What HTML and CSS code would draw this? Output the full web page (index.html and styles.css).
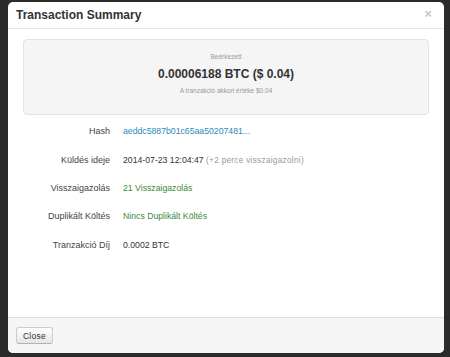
FILE: index.html
```html
<!DOCTYPE html>
<html lang="hu">
<head>
    <meta charset="UTF-8"/>
    <title>Transaction Summary</title>
    <link rel="stylesheet" href="styles.css">
</head>
<body>
    <div class="backdrop">
        <div class="modal">
            <div class="modal-header">
                <h3>Transaction Summary</h3>
                <span class="close-x">&times;</span>
            </div>
            <div class="modal-body">
                <div class="well">
                    <div class="well-small">Beérkezett</div>
                    <div class="amount">0.00006188 BTC ($ 0.04)</div>
                    <div class="well-small">A tranzakció akkori értéke $0.04</div>
                </div>
                <div class="details">
                    <div class="row">
                        <span class="label">Hash</span>
                        <span class="value link">aeddc5887b01c65aa50207481...</span>
                    </div>
                    <div class="row">
                        <span class="label">Küldés ideje</span>
                        <span class="value">2014-07-23 12:04:47 <span class="muted">(+2 perce visszaigazolni)</span></span>
                    </div>
                    <div class="row">
                        <span class="label">Visszaigazolás</span>
                        <span class="value ok">21 Visszaigazolás</span>
                    </div>
                    <div class="row">
                        <span class="label">Duplikált Költés</span>
                        <span class="value ok">Nincs Duplikált Költés</span>
                    </div>
                    <div class="row">
                        <span class="label">Tranzakció Díj</span>
                        <span class="value">0.0002 BTC</span>
                    </div>
                </div>
            </div>
            <div class="modal-footer">
                <button type="button">Close</button>
            </div>
        </div>
    </div>
</body>
</html>
```

FILE: styles.css
```css
html, body {
    margin: 0;
    height: 100%;
    background: #2b2b2b;
}

body {
    font-family: "Liberation Sans", Arial, sans-serif;
    color: #333;
}

.backdrop {
    padding: 2px 6px 0 8px;
    height: 100%;
    box-sizing: border-box;
}

.modal {
    background: #fff;
    border-radius: 5px;
    height: 351px;
    display: flex;
    flex-direction: column;
    overflow: hidden;
}

.modal-header {
    height: 27px;
    border-bottom: 1px solid #e5e5e5;
    display: flex;
    align-items: center;
    justify-content: space-between;
    padding: 0 12px 0 8px;
    box-sizing: border-box;
}

.modal-header h3 {
    margin: 0;
    font-size: 12px;
    font-weight: bold;
    color: #333;
}

.close-x {
    font-size: 13px;
    font-weight: bold;
    color: #c8c8c8;
    margin-top: -4px;
}

.modal-body {
    flex: 1;
    padding: 10px 15px 0 15px;
}

.well {
    height: 76px;
    box-sizing: border-box;
    background: #f5f5f5;
    border: 1px solid #e3e3e3;
    border-radius: 4px;
    text-align: center;
    padding-top: 12px;
}

.well-small {
    font-size: 6.5px;
    color: #999;
    line-height: 9px;
}

.amount {
    font-size: 12px;
    font-weight: bold;
    color: #333;
    line-height: 14px;
    margin: 6px 0 5px;
}

.details {
    padding-top: 2px;
}

.row {
    display: flex;
    align-items: center;
    height: 28.4px;
    font-size: 9px;
}

.label {
    width: 87px;
    text-align: right;
    color: #444;
    margin-right: 13px;
}

.value {
    color: #333;
    font-size: 8.7px;
}

.link {
    color: #2a8bb8;
}

.ok {
    color: #3a8a3a;
}

.muted {
    color: #999;
    font-size: 8.2px;
    letter-spacing: 0.3px;
}

.modal-footer {
    height: 36px;
    background: #f5f5f5;
    border-top: 1px solid #ddd;
    box-sizing: border-box;
    display: flex;
    align-items: center;
    padding-left: 8px;
}

.modal-footer button {
    font-family: "Liberation Sans", Arial, sans-serif;
    font-size: 8.5px;
    color: #333;
    width: 37px;
    height: 17px;
    padding: 0;
    background: linear-gradient(#fff, #e6e6e6);
    border: 1px solid #ccc;
    border-bottom-color: #b3b3b3;
    border-radius: 3px;
    letter-spacing: 0.3px;
}
```
